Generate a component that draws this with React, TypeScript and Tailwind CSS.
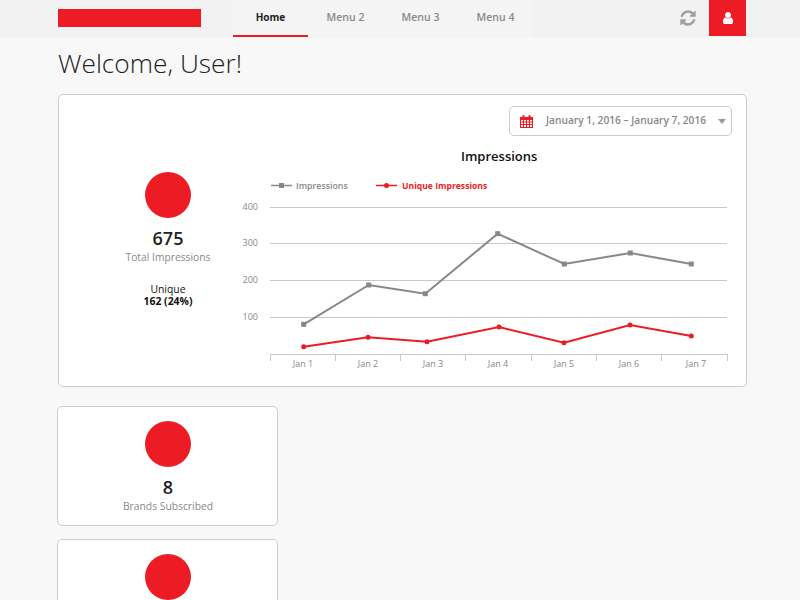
const grayPts = [[303.7,324.3],[368.7,285],[425.3,293.7],[497.7,233.7],[564.3,264],[630.3,253],[691.3,264]];
const redPts = [[303.7,346.7],[368,337.3],[427,341.7],[499,327],[564,342.7],[630,325],[691.3,336]];
const ticks = [270.5,335.5,400.5,465.5,531.5,596.5,661.5,727.5];
const labels = [[303,"Jan 1"],[368,"Jan 2"],[433,"Jan 3"],[498,"Jan 4"],[564,"Jan 5"],[629,"Jan 6"],[696,"Jan 7"]] as const;
const grids = [[207.5,"400"],[243.5,"300"],[280.5,"200"],[317.5,"100"]] as const;
const poly = (p: number[][]) => p.map((q) => q.join(",")).join(" ");

function Chart() {
  return (
    <svg viewBox="240 176 490 199" className="block w-[490px] h-[199px]" style={{ fontFamily: "'Open Sans', sans-serif" }}>
      <line x1="271" x2="292" y1="185.5" y2="185.5" stroke="#888" strokeWidth="1.5" />
      <rect x="279" y="183" width="5" height="5" fill="#888" />
      <text x="296" y="188.5" fontSize="8.8" fill="#888" fontWeight="600">Impressions</text>
      <line x1="376" x2="397" y1="185.5" y2="185.5" stroke="#ed1c24" strokeWidth="1.5" />
      <circle cx="386.5" cy="185.5" r="2.5" fill="#ed1c24" />
      <text x="402" y="188.5" fontSize="8.6" fill="#ed1c24" fontWeight="700">Unique Impressions</text>
      {grids.map(([y, t]) => (
        <g key={t}>
          <line x1="270" x2="727" y1={y} y2={y} stroke="#c8c8c8" strokeWidth="1" />
          <text x="258" y={y + 2.5} fontSize="9" fill="#888" textAnchor="end">{t}</text>
        </g>
      ))}
      <line x1="270" x2="728" y1="354.5" y2="354.5" stroke="#c8c8c8" strokeWidth="1" />
      {ticks.map((x) => (
        <line key={x} x1={x} x2={x} y1="354" y2="361" stroke="#c8c8c8" strokeWidth="1" />
      ))}
      {labels.map(([x, t]) => (
        <text key={t} x={x} y="367" fontSize="9" fill="#888" textAnchor="middle">{t}</text>
      ))}
      <polyline points={poly(grayPts)} fill="none" stroke="#888" strokeWidth="2" />
      {grayPts.map(([x, y]) => (
        <rect key={x} x={x - 2.5} y={y - 2.5} width="5" height="5" fill="#888" />
      ))}
      <polyline points={poly(redPts)} fill="none" stroke="#ed1c24" strokeWidth="2" />
      {redPts.map(([x, y]) => (
        <circle key={x} cx={x} cy={y} r="2.5" fill="#ed1c24" />
      ))}
    </svg>
  );
}

function CalendarIcon() {
  return (
    <svg viewBox="0 0 13 13" className="w-[13px] h-[13px]" fill="#ed1c24">
      <path fillRule="evenodd" d="M0 2h2.5V1a1 1 0 0 1 2 0v1h4V1a1 1 0 0 1 2 0v1H13v11H0zM1 5v1.5h2V5zm3 0v1.5h2V5zm3 0v1.5h2V5zm3 0v1.5h2V5zM1 7.500V9h2V7.500zm3 0V9h2V7.500zm3 0V9h2V7.500zm3 0V9h2V7.500zM1 10v2h2v-2zm3 0v2h2v-2zm3 0v2h2v-2zm3 0v2h2v-2z" />
    </svg>
  );
}

function StatCard({ value, label }: { value: string; label: string }) {
  return (
    <div className="w-[221px] h-[120px] ml-[-1px] pl-[1px] bg-white border border-[#ccc] rounded-[5px] flex flex-col items-center pt-[14px] shrink-0">
      <div className="w-[46px] h-[46px] rounded-full bg-[#ed1c24]" />
      <div className="mt-[8px] text-[18px] leading-[24px] font-semibold text-[#222]">{value}</div>
      <div className="text-[10.3px] leading-[15px] text-[#888]">{label}</div>
    </div>
  );
}

export default function App() {
  return (
    <div className="w-[800px] h-[600px] overflow-hidden bg-[#f8f8f8] font-['Open_Sans',sans-serif]">
      <header className="h-[37px] bg-[#f2f2f2] flex pl-[58px]">
        <div className="w-[143px] h-[18px] mt-[9px] bg-[#ed1c24]" />
        <nav className="ml-[32px] w-[300px] h-[37px] bg-[#f4f4f4] flex text-[10.5px] font-semibold text-[#888]">
          <div className="w-[75px] h-[37px] border-b-2 border-[#ed1c24] flex items-center justify-center text-[10px] font-bold text-[#222]">Home</div>
          <div className="w-[75px] flex items-center justify-center pb-[2px]">Menu 2</div>
          <div className="w-[75px] flex items-center justify-center pb-[2px]">Menu 3</div>
          <div className="w-[75px] flex items-center justify-center pb-[2px]">Menu 4</div>
        </nav>
        <div className="ml-[146px] h-[36px] flex items-center">
          <svg viewBox="0 0 1792 1792" className="w-[18px] h-[18px]" fill="#a0a0a0">
            <path d="M1639 1056q0 5-1 7-64 268-268 434.500t-478 166.500q-146 0-282.500-55t-243.500-157l-129 129q-19 19-45 19t-45-19-19-45v-448q0-26 19-45t45-19h448q26 0 45 19t19 45-19 45l-137 137q71 66 161 102t187 36q134 0 250-65t186-179q11-17 53-117 8-23 30-23h192q13 0 22.500 9.500t9.500 22.500zm25-800v448q0 26-19 45t-45 19h-448q-26 0-45-19t-19-45 19-45l138-138q-148-137-349-137-134 0-250 65t-186 179q-11 17-53 117-8 23-30 23h-199q-13 0-22.500-9.500t-9.500-22.500v-7q65-268 270-434.500t480-166.500q146 0 284 55.500t245 156.500l130-129q19-19 45-19t45 19 19 45z" />
          </svg>
        </div>
        <div className="ml-[12px] w-[37px] h-[36px] bg-[#ed1c24] flex items-center justify-center">
          <svg viewBox="0 0 1792 1792" className="w-[14px] h-[14px]" fill="#fff">
            <path d="M1536 1399q0 109-62.500 187t-150.500 78h-854q-88 0-150.500-78t-62.500-187q0-85 8.500-160.500t31.500-152 58.500-131 94-89 134.500-34.500q131 128 313 128t313-128q76 0 134.500 34.500t94 89 58.500 131 31.500 152 8.500 160.500zm-256-887q0 159-112.500 271.500t-271.500 112.500-271.500-112.500-112.500-271.500 112.500-271.500 271.500-112.500 271.500 112.500 112.500 271.500z" />
          </svg>
        </div>
      </header>
      <main className="pl-[58px]">
        <h1 className="mt-[7px] text-[26.3px] leading-[38px] font-light text-[#222]">Welcome, User!</h1>
        <section className="mt-[12px] w-[689px] h-[293px] bg-white border border-[#ccc] rounded-[5px] flex flex-col">
          <div className="flex justify-end pt-[11px] pr-[14px]">
            <div className="w-[223px] h-[30px] border border-[#ccc] rounded-[5px] flex items-center pl-[10px] pr-[5px] text-[10.2px] font-semibold text-[#888] whitespace-nowrap">
              <CalendarIcon />
              <span className="ml-[13px]">January 1, 2016 – January 7, 2016</span>
              <span className="ml-auto w-0 h-0 border-x-[4px] border-x-transparent border-t-[5px] border-t-[#999]" />
            </div>
          </div>
          <div className="mt-[11px] pl-[402px] text-[13px] leading-[18px] font-semibold text-[#111]">Impressions</div>
          <div className="flex">
            <div className="w-[181px] shrink-0 pl-[37px] flex flex-col items-center mt-[7px]">
              <div className="w-[46px] h-[46px] rounded-full bg-[#ed1c24]" />
              <div className="mt-[8px] text-[18px] leading-[24px] font-semibold text-[#222]">675</div>
              <div className="text-[10.3px] leading-[14px] text-[#888]">Total Impressions</div>
              <div className="mt-[19px] text-[10.4px] leading-[12px] text-[#111]">Unique</div>
              <div className="text-[10.4px] leading-[12px] font-bold text-[#111]">162 (24%)</div>
            </div>
            <div className="mt-[11px]">
              <Chart />
            </div>
          </div>
        </section>
        <div className="mt-[19px] flex flex-col gap-[13px]">
          <StatCard value="8" label="Brands Subscribed" />
          <StatCard value="" label="" />
        </div>
      </main>
    </div>
  );
}
